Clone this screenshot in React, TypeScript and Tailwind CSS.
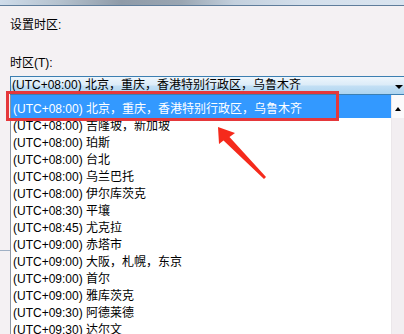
import React from "react";

const items = [
  "(UTC+08:00) 吉隆坡，新加坡",
  "(UTC+08:00) 珀斯",
  "(UTC+08:00) 台北",
  "(UTC+08:00) 乌兰巴托",
  "(UTC+08:00) 伊尔库茨克",
  "(UTC+08:30) 平壤",
  "(UTC+08:45) 尤克拉",
  "(UTC+09:00) 赤塔市",
  "(UTC+09:00) 大阪，札幌，东京",
  "(UTC+09:00) 首尔",
  "(UTC+09:00) 雅库茨克",
  "(UTC+09:30) 阿德莱德",
  "(UTC+09:30) 达尔文",
];

export default function App() {
  return (
    <div
      className="relative w-[404px] h-[334px] overflow-hidden bg-[#f4f1f3] text-[12px] text-black"
      style={{ fontFamily: '"Liberation Sans", "Noto Sans CJK SC", sans-serif' }}
    >
      {/* top strip */}
      <div className="h-[6px] border-b border-[#5f7d9b] bg-[linear-gradient(to_right,#cfdcea_0%,#b4c1cd_15%,#8f9ba8_30%,#9aa6b2_45%,#c3d0dd_58%,#d3dfeb_75%,#d9e4ef_100%)]" />

      <div className="pl-[10px]">
        <div className="mt-[11px] leading-[16px]">设置时区:</div>
        <div className="mt-[22px] leading-[16px]">时区(T):</div>

        {/* combobox */}
        <div className="mt-[5px] flex h-[19px] items-center border border-r-0 border-[#3c7fb1] bg-[linear-gradient(to_bottom,#eef6fc_0%,#dcecf8_45%,#c2dff4_55%,#add4f0_100%)]">
          <span className="pl-[1px] leading-[17px] whitespace-nowrap">
            (UTC+08:00) 北京，重庆，香港特别行政区，乌鲁木齐
          </span>
          <div className="ml-auto mr-[1px] mt-[3px] h-0 w-0 border-x-[4px] border-t-[4px] border-x-transparent border-t-black" />
        </div>

        {/* dropdown list */}
        <div className="flex border-l border-[#8b96a3] bg-white">
          <div className="flex-1">
            <div className="h-[23px] bg-[#3399ff] pl-[2px] pt-[6px] leading-[17px] text-white whitespace-nowrap">
              (UTC+08:00) 北京，重庆，香港特别行政区，乌鲁木齐
            </div>
            {items.map((t) => (
              <div key={t} className="h-[17px] pl-[2px] leading-[17px] whitespace-nowrap">
                {t}
              </div>
            ))}
          </div>
          <div className="w-[13px] bg-[#f2eef1] border-l border-[#ebe7ea]">
            <div className="flex h-[23px] items-end justify-center bg-[#fbfafb] pb-[7px]">
              <div className="h-0 w-0 border-x-[3px] border-b-[4px] border-x-transparent border-b-black" />
            </div>
          </div>
        </div>
      </div>

      {/* background line behind popup */}
      <div className="absolute left-0 top-[250px] h-[1px] w-[10px] bg-[#9fb0c4]" />

      {/* red annotation box */}
      <div className="absolute left-[6px] top-[91px] h-[30px] w-[333px] border-[3px] border-[#e5383b]" />

      {/* red arrow */}
      <svg className="absolute left-0 top-0" width="404" height="334" viewBox="0 0 404 334">
        <polygon
          points="218,127 235,133 229.5,137 266,177 264,179 223.5,140.5 219,144"
          fill="#f52a1c"
        />
      </svg>
    </div>
  );
}
